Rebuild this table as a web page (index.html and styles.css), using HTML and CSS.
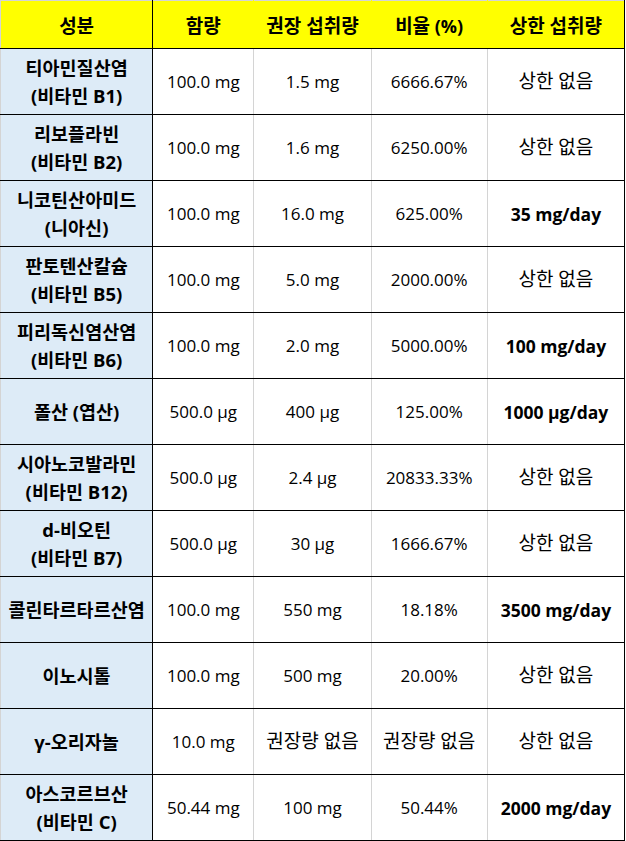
FILE: index.html
```html
<!DOCTYPE html>
<html lang="ko">
<head>
<meta charset="utf-8">
<link rel="stylesheet" href="styles.css">
</head>
<body>
<table class="nutri">
  <colgroup>
    <col class="c1"><col class="c2"><col class="c3"><col class="c4"><col class="c5">
  </colgroup>
  <thead>
    <tr>
      <th class="name"><span class="k">성분</span></th><th><span class="k">함량</span></th><th><span class="k">권장 섭취량</span></th><th><span class="k">비율</span> (%)</th><th><span class="k">상한 섭취량</span></th>
    </tr>
  </thead>
  <tbody>
    <tr><td class="name">티아민질산염<br>(비타민 B1)</td><td>100.0 mg</td><td>1.5 mg</td><td>6666.67%</td><td><span class="k">상한 없음</span></td></tr>
    <tr><td class="name">리보플라빈<br>(비타민 B2)</td><td>100.0 mg</td><td>1.6 mg</td><td>6250.00%</td><td><span class="k">상한 없음</span></td></tr>
    <tr><td class="name">니코틴산아미드<br>(니아신)</td><td>100.0 mg</td><td>16.0 mg</td><td>625.00%</td><td class="limit">35 mg/day</td></tr>
    <tr><td class="name">판토텐산칼슘<br>(비타민 B5)</td><td>100.0 mg</td><td>5.0 mg</td><td>2000.00%</td><td><span class="k">상한 없음</span></td></tr>
    <tr><td class="name">피리독신염산염<br>(비타민 B6)</td><td>100.0 mg</td><td>2.0 mg</td><td>5000.00%</td><td class="limit">100 mg/day</td></tr>
    <tr><td class="name">폴산 (엽산)</td><td>500.0 µg</td><td>400 µg</td><td>125.00%</td><td class="limit">1000 µg/day</td></tr>
    <tr><td class="name">시아노코발라민<br>(비타민 B12)</td><td>500.0 µg</td><td>2.4 µg</td><td>20833.33%</td><td><span class="k">상한 없음</span></td></tr>
    <tr><td class="name">d-비오틴<br>(비타민 B7)</td><td>500.0 µg</td><td>30 µg</td><td>1666.67%</td><td><span class="k">상한 없음</span></td></tr>
    <tr><td class="name">콜린타르타르산염</td><td>100.0 mg</td><td>550 mg</td><td>18.18%</td><td class="limit">3500 mg/day</td></tr>
    <tr><td class="name">이노시톨</td><td>100.0 mg</td><td>500 mg</td><td>20.00%</td><td><span class="k">상한 없음</span></td></tr>
    <tr><td class="name">γ-오리자놀</td><td>10.0 mg</td><td><span class="k">권장량 없음</span></td><td><span class="k">권장량 없음</span></td><td><span class="k">상한 없음</span></td></tr>
    <tr><td class="name">아스코르브산<br>(비타민 C)</td><td>50.44 mg</td><td>100 mg</td><td>50.44%</td><td class="limit">2000 mg/day</td></tr>
  </tbody>
</table>
</body>
</html>
```

FILE: styles.css
```css
html, body {
  margin: 0;
  padding: 0;
  background: #ffffff;
}

.nutri {
  border-collapse: collapse;
  table-layout: fixed;
  width: 625px;
  font-family: "Open Sans", "Noto Sans CJK KR", sans-serif;
  color: #000;
  border-top: 1px solid #d4d4d4;
  border-left: 1px solid #d4d4d4;
}

.c1 { width: 152px; }
.c2 { width: 101px; }
.c3 { width: 117px; }
.c4 { width: 116px; }
.c5 { width: 137px; }

.nutri th {
  background: #ffff00;
  height: 47px;
  padding: 0;
  font-size: 18px;
  font-weight: 700;
  text-align: center;
  vertical-align: middle;
  border-bottom: 1px solid #000;
  border-right: 1px solid #000;
  white-space: nowrap;
}

.nutri th .k {
  font-size: 19px;
}

.nutri td {
  height: 65px;
  padding: 0;
  font-size: 17px;
  text-align: center;
  vertical-align: middle;
  border-bottom: 1px solid #000;
  border-right: 1px solid #d4d4d4;
  line-height: 28px;
  white-space: nowrap;
}

.nutri td .k {
  font-size: 19px;
}

.nutri th:not(:first-child):not(:last-child) {
  border-right: 1px solid #ffff00;
}

.nutri td.name {
  background: #ddebf7;
  font-weight: 700;
  font-size: 18.5px;
  border-right: 1px solid #000;
}

.nutri td:last-child,
.nutri th:last-child {
  border-right: 1px solid #000;
}

.nutri td.limit {
  font-weight: 700;
  font-size: 17.5px;
}
```
